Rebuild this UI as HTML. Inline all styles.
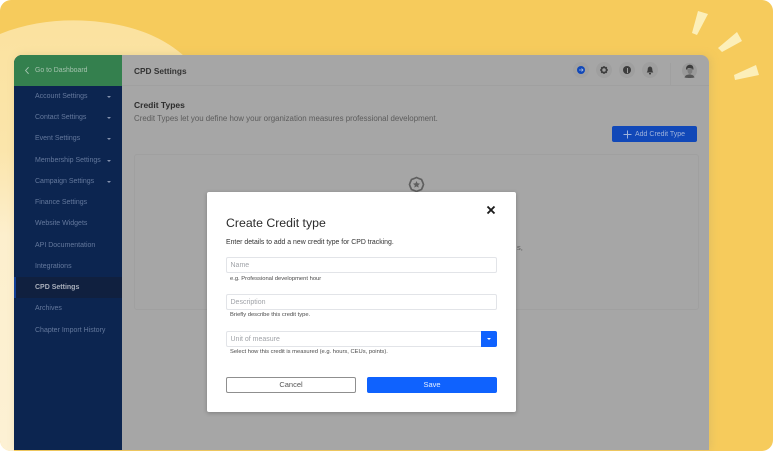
<!DOCTYPE html>
<html><head><meta charset="utf-8">
<style>
html,body{margin:0;padding:0;background:#fff}
#r{position:relative;width:773px;height:451px;overflow:hidden;font-family:"Liberation Sans",sans-serif}
#r *{box-sizing:border-box}
.a{position:absolute;white-space:nowrap}
.nav{position:absolute;left:35px;font-size:7px;line-height:10px;color:#64789c;white-space:nowrap}
.car{position:absolute;left:107px;width:0;height:0;border-left:2.5px solid transparent;border-right:2.5px solid transparent;border-top:2.5px solid #8391ad}
.inp{position:absolute;left:226px;width:271px;height:16px;border:1px solid #e2e4e8;border-radius:2px;background:#fff;font-size:7px;line-height:15.5px;padding-left:3.5px;color:#a0a3a8}
.hlp{position:absolute;left:230px;font-size:5.8px;line-height:8px;color:#4a4a4a;white-space:nowrap}
.ic{position:absolute;top:62px;width:16px;height:16px;border-radius:50%;background:#9f9f9f}
</style></head><body>
<div id="r">
<svg class="a" style="left:0;top:0" width="773" height="451" viewBox="0 0 773 451">
<defs><linearGradient id="g" x1="0" y1="0" x2="0" y2="1"><stop offset="0" stop-color="#fbe29f"/><stop offset=".3" stop-color="#fbe5ab"/><stop offset=".5" stop-color="#fdefcd"/><stop offset="1" stop-color="#fdf1d4"/></linearGradient></defs>
<rect width="773" height="451" rx="11" fill="#f6cb5c"/>
<path d="M0 34C30 22 60 19 90 21C130 24 162 36 184 56L184 120L14 120L14 451L11 451C5 451 0 446 0 440Z" fill="url(#g)"/>
<path d="M698 11L708 14L697 35L692 33Z" fill="#fcefb9"/>
<path d="M737 32L742 41L722 52L718 48Z" fill="#fcefb9"/>
<path d="M756 65L759 75L735 80L734 75Z" fill="#fcefb9"/>
</svg>
<div class="a" style="left:14px;top:55px;width:695px;height:395px;border-radius:8px 8px 0 0;overflow:hidden;background:#a6a6a6;box-shadow:2px 0 8px rgba(190,170,110,.35)">
 <div class="a" style="left:0;top:0;width:108px;height:395px;background:#0c2550"></div>
 <div class="a" style="left:0;top:0;width:108px;height:31px;background:#34804e"></div>
 <div class="a" style="left:108px;top:0;width:587px;height:31px;border-bottom:1px solid #a0a0a0"></div>
 <div class="a" style="left:1px;top:222px;width:107px;height:21px;background:#10203f"></div>
 <div class="a" style="left:0;top:222px;width:2px;height:21px;background:#123f96"></div>
 <div class="a" style="left:120px;top:99px;width:565px;height:156px;border:1px solid #a0a0a0;border-radius:3px"></div>
 <div class="a" style="left:598px;top:71px;width:85px;height:16px;background:#1148b8;border-radius:2px"></div>
 <div class="a" style="left:656px;top:8px;width:1px;height:22px;background:#a0a0a0"></div>
</div>
<svg class="a" style="left:24px;top:66px" width="7" height="9" viewBox="0 0 7 9"><path d="M4.6 1.2L1.6 4.5L4.6 7.8" fill="none" stroke="#a8c7b3" stroke-width=".9"/></svg>
<div class="a" style="left:35px;top:66px;font-size:6.9px;line-height:10px;color:#a3c2ad">Go to Dashboard</div>
<div class="nav" style="top:92px">Account Settings</div><div class="car" style="top:95.5px"></div>
<div class="nav" style="top:113px">Contact Settings</div><div class="car" style="top:117px"></div>
<div class="nav" style="top:134px">Event Settings</div><div class="car" style="top:138px"></div>
<div class="nav" style="top:156px">Membership Settings</div><div class="car" style="top:159.5px"></div>
<div class="nav" style="top:177px">Campaign Settings</div><div class="car" style="top:181px"></div>
<div class="nav" style="top:198px">Finance Settings</div>
<div class="nav" style="top:219px">Website Widgets</div>
<div class="nav" style="top:241px">API Documentation</div>
<div class="nav" style="top:262px">Integrations</div>
<div class="nav" style="top:283px;color:#a9afbb;font-weight:bold">CPD Settings</div>
<div class="nav" style="top:304px">Archives</div>
<div class="nav" style="top:326px">Chapter Import History</div>

<div class="a" style="left:134px;top:65px;font-size:8.3px;line-height:12px;font-weight:bold;color:#333">CPD Settings</div>
<div class="a" style="left:134px;top:98.5px;font-size:8.5px;line-height:12px;font-weight:bold;color:#2c2c2c">Credit Types</div>
<div class="a" style="left:134px;top:113px;font-size:7.9px;line-height:12px;color:#5c5c5c">Credit Types let you define how your organization measures professional development.</div>
<svg class="a" style="left:623px;top:130px" width="9" height="9" viewBox="0 0 9 9"><path d="M4.5 .5V8.5M.5 4.5H8.5" stroke="#9fb3db" stroke-width="1"/></svg>
<div class="a" style="left:635px;top:129px;font-size:7px;line-height:11px;color:#9fb3db">Add Credit Type</div>
<svg class="a" style="left:408px;top:176px" width="17" height="17" viewBox="0 0 17 17"><path d="M8.5 1.5L11 2.6L13.5 3.5L14.6 6L15.5 8.5L14.6 11L13.5 13.5L11 14.4L8.5 15.5L6 14.4L3.5 13.5L2.4 11L1.5 8.5L2.4 6L3.5 3.5L6 2.6Z" fill="none" stroke="#5f5f5f" stroke-width="1.7"/><path d="M8.5 5L9.5 7.3L12 7.6L10.2 9.2L10.7 11.6L8.5 10.4L6.3 11.6L6.8 9.2L5 7.6L7.5 7.3Z" fill="#5f5f5f"/></svg>
<div class="a" style="left:517px;top:243px;font-size:7.5px;line-height:10px;color:#5c5c5c">s,</div>

<div class="ic" style="left:573px;background:#a1a1a1"></div>
<div class="a" style="left:577px;top:66px;width:8px;height:8px;border-radius:50%;background:#1148b8"></div>
<svg class="a" style="left:577px;top:66px" width="8" height="8" viewBox="0 0 8 8"><path d="M2 4H6M4.5 2.6L6 4L4.5 5.4" fill="none" stroke="#a9bce0" stroke-width=".8"/></svg>
<div class="ic" style="left:596px"></div>
<svg class="a" style="left:599px;top:65px" width="10" height="10" viewBox="0 0 10 10"><circle cx="5" cy="5" r="2.6" fill="none" stroke="#3d3d3d" stroke-width="1.7"/><path d="M5 1V2.4M5 7.6V9M1 5H2.4M7.6 5H9M2.2 2.2L3.1 3.1M6.9 6.9L7.8 7.8M2.2 7.8L3.1 6.9M6.9 3.1L7.8 2.2" stroke="#3d3d3d" stroke-width="1.2"/></svg>
<div class="ic" style="left:619px"></div>
<div class="a" style="left:623px;top:66px;width:8px;height:8px;border-radius:50%;background:#3d3d3d"></div>
<div class="a" style="left:626.5px;top:67.5px;width:1px;height:5px;background:#a0a0a0"></div>
<div class="ic" style="left:642px"></div>
<svg class="a" style="left:646px;top:66px" width="8" height="9" viewBox="0 0 8 9"><path d="M4 .6C2.4.6 1.7 1.9 1.7 3.4C1.7 5 1.2 5.7.7 6.5H7.3C6.8 5.7 6.3 5 6.3 3.4C6.3 1.9 5.6.6 4 .6Z" fill="#3d3d3d"/><rect x="3" y="7" width="2" height="1.4" fill="#3d3d3d"/></svg>
<svg class="a" style="left:682px;top:63px" width="15" height="15" viewBox="0 0 15 15"><circle cx="7.5" cy="7.5" r="7.5" fill="#9a9a9a"/><path d="M4 6C4 3 6 1.7 8 1.7C10.5 1.7 11.5 3.5 11.5 6.5L10.5 6.5C10 5 8 5 6 5L5 7Z" fill="#3c3c3c"/><path d="M5 5.5H10.5L10.2 9.5L8 11.5L6 10Z" fill="#7d7d7d"/><path d="M2.5 14.5C3 12.5 5 11.5 7.5 11.5C10 11.5 12 12.5 12.5 14.5C10 15.2 5 15.2 2.5 14.5Z" fill="#555"/></svg>

<div class="a" style="left:207px;top:192px;width:309px;height:220px;background:#fff;border-radius:2px;box-shadow:0 1px 4px rgba(0,0,0,.25)"></div>
<svg class="a" style="left:486px;top:205px" width="10" height="10" viewBox="0 0 10 10"><path d="M1.5 1.5L8.5 8.5M8.5 1.5L1.5 8.5" stroke="#1c1c1c" stroke-width="1.9"/></svg>
<div class="a" style="left:226px;top:215px;font-size:12.3px;line-height:16px;color:#2b2b2b">Create Credit type</div>
<div class="a" style="left:226px;top:238px;font-size:6.9px;line-height:10px;color:#333">Enter details to add a new credit type for CPD tracking.</div>
<div class="inp" style="top:257px">Name</div>
<div class="hlp" style="top:275px">e.g. Professional development hour</div>
<div class="inp" style="top:294px">Description</div>
<div class="hlp" style="top:311px">Briefly describe this credit type.</div>
<div class="inp" style="top:331px">Unit of measure</div>
<div class="a" style="left:481px;top:331px;width:16px;height:16px;background:#0f62fe;border-radius:0 2px 2px 0"></div>
<div class="a" style="left:487px;top:338px;width:0;height:0;border-left:2.5px solid transparent;border-right:2.5px solid transparent;border-top:2.5px solid #fff"></div>
<div class="hlp" style="top:348px">Select how this credit is measured (e.g. hours, CEUs, points).</div>
<div class="a" style="left:226px;top:377px;width:130px;height:16px;border:1px solid #8f8f8f;border-radius:2px;text-align:center;font-size:7.5px;line-height:14px;color:#555">Cancel</div>
<div class="a" style="left:367px;top:377px;width:130px;height:16px;background:#0f62fe;border-radius:2px;text-align:center;font-size:7.5px;line-height:16px;color:#e6efff">Save</div>
</div>
</body></html>
